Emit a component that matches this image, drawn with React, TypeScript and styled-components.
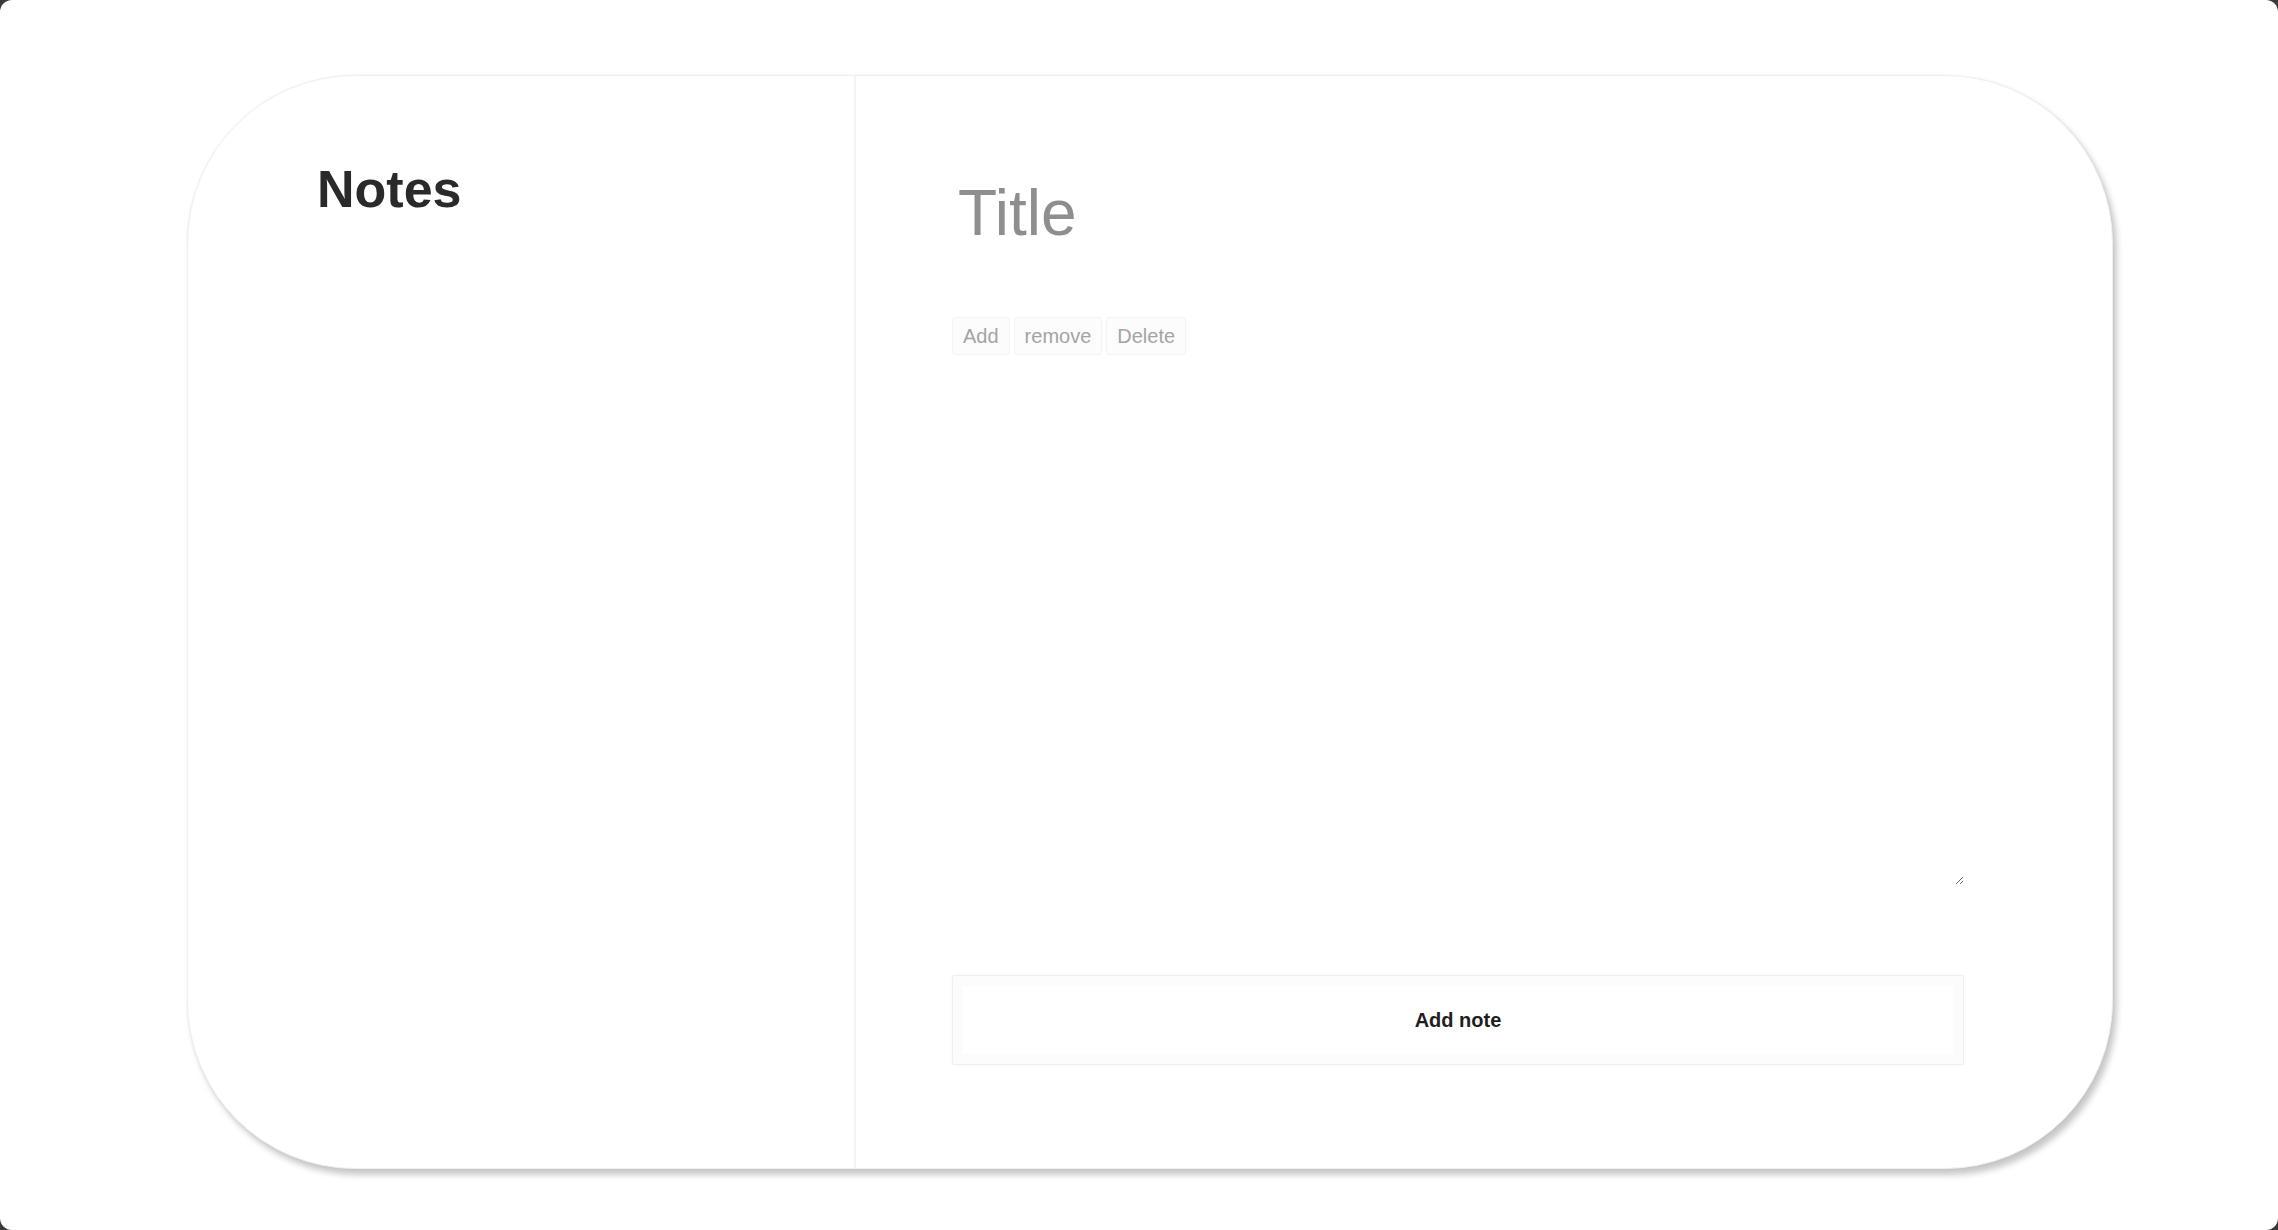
import React from "react";
import styled, { createGlobalStyle } from "styled-components";

const GlobalStyle = createGlobalStyle`
  html, body {
    margin: 0;
    padding: 0;
    background: #3a3a3a;
  }
  body {
    font-family: "Liberation Sans", Arial, sans-serif;
  }
  * {
    box-sizing: border-box;
  }
`;

const Screen = styled.div`
  min-height: 1230px;
  background: #ffffff;
  border-radius: 12px;
  padding: 75px 165px 0 187px;
`;

const Card = styled.div`
  display: grid;
  grid-template-columns: 668px 1fr;
  height: 1094px;
  background: #ffffff;
  border: 1px solid #efefef;
  border-radius: 168px;
  box-shadow: 4px 6px 6px rgba(0, 0, 0, 0.22), 0 0 3px rgba(0, 0, 0, 0.05);
  overflow: hidden;
`;

const Sidebar = styled.aside`
  border-right: 2px solid #f3f3f3;
  padding: 84px 0 0 129px;
`;

const SidebarTitle = styled.h1`
  margin: 0;
  font-size: 52px;
  line-height: 1.15;
  font-weight: 700;
  color: #2a2a2a;
`;

const Editor = styled.main`
  display: flex;
  flex-direction: column;
  padding: 100px 0 0 96px;
  width: 1108px;
`;

const TitleInput = styled.input`
  border: none;
  outline: none;
  background: transparent;
  padding: 0 0 0 6px;
  font-family: "Liberation Sans", Arial, sans-serif;
  font-size: 64px;
  line-height: 74px;
  height: 74px;
  color: #222;
  &::placeholder {
    color: #8e8e8e;
  }
`;

const Toolbar = styled.div`
  display: flex;
  gap: 4px;
  margin-top: 67px;
`;

const ToolButton = styled.button`
  font-family: "Liberation Sans", Arial, sans-serif;
  font-size: 20px;
  color: #a4a4a4;
  background: #fcfcfc;
  border: 1px solid #f4f4f4;
  border-radius: 3px;
  padding: 7px 10px;
  line-height: 22px;
`;

const Body = styled.textarea`
  margin-top: 10px;
  height: 520px;
  border: none;
  outline: none;
  resize: vertical;
  background: transparent;
  font-family: "Liberation Sans", Arial, sans-serif;
  font-size: 20px;
  color: #333;
`;

const AddButton = styled.button`
  margin-top: 90px;
  height: 90px;
  background: #ffffff;
  border: 1px solid #efefef;
  border-radius: 2px;
  box-shadow: inset 0 0 0 10px #fcfcfc, 0 0 4px rgba(0, 0, 0, 0.03);
  font-family: "Liberation Sans", Arial, sans-serif;
  font-size: 20px;
  font-weight: 700;
  color: #1e1e1e;
`;

export default function App() {
  return (
    <>
      <GlobalStyle />
      <Screen>
        <Card>
          <Sidebar>
            <SidebarTitle>Notes</SidebarTitle>
          </Sidebar>
          <Editor>
            <TitleInput placeholder="Title" />
            <Toolbar>
              <ToolButton>Add</ToolButton>
              <ToolButton>remove</ToolButton>
              <ToolButton>Delete</ToolButton>
            </Toolbar>
            <Body />
            <AddButton>Add note</AddButton>
          </Editor>
        </Card>
      </Screen>
    </>
  );
}
